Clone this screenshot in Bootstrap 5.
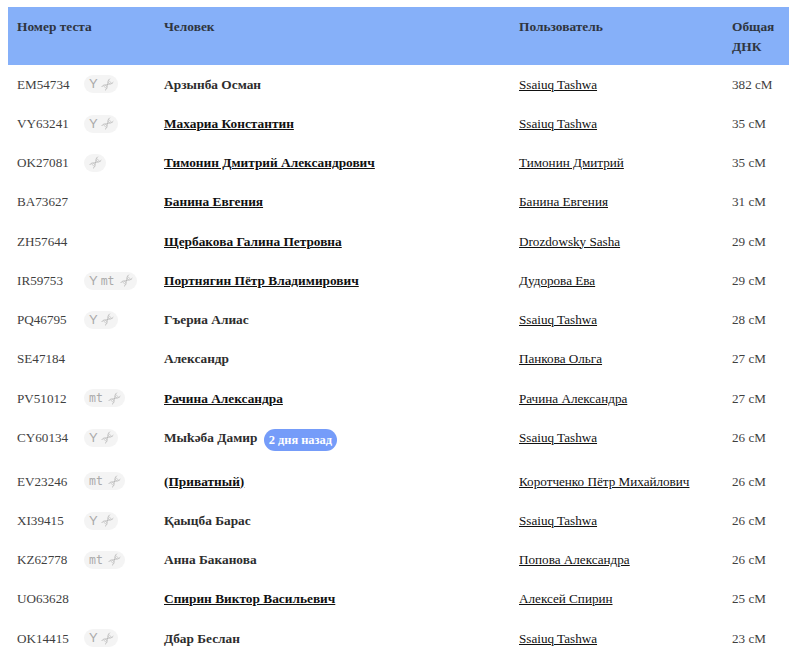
<!DOCTYPE html>
<html lang="ru">
<head>
<meta charset="utf-8">
<title>Совпадения</title>
<link href="https://cdn.jsdelivr.net/npm/bootstrap@5.3.0/dist/css/bootstrap.min.css" rel="stylesheet">
<style>
body{font-family:"Liberation Serif",serif;background:#fff;color:#333;overflow:hidden;height:660px}
.wrap-page{padding:7px 0 0 8px}
.match-table{table-layout:fixed;width:781px;margin:0;font-size:13.15px;line-height:19.5px;--bs-table-bg:transparent}
.match-table col.c1{width:147px}.match-table col.c2{width:355px}.match-table col.c3{width:213px}.match-table col.c4{width:66px}
.match-table th{background:#86b0f9;color:#2f3540;font-weight:700;font-size:13.4px;padding:10px 9px 9px;border:0;height:58px;vertical-align:top}
.match-table td{padding:9.5px 9px 10.25px;border:0;vertical-align:top;color:#3f3f3f}
.match-table td.who{font-weight:700;font-size:13.35px;color:#2d2d2d}
.match-table a{color:#111}
.kit-cell{display:flex;align-items:center;width:128px;height:19.5px}
.kit-id{width:67px;flex:none}
.kit-tags{display:inline-flex;align-items:center;gap:5px;background:#f4f4f4;border-radius:9px;height:18px;padding:0 4px 0 5px;font-family:"DejaVu Sans Mono","Liberation Mono",monospace;font-size:11.5px;color:#aaa;line-height:18px}
.kit-tags svg{width:13px;height:13px;display:block}
.kit-tags .ysign{font-family:"Liberation Sans",sans-serif;font-size:13px;margin-right:-2px}
.when{display:inline-block;background:#759cf9;color:#fff;border-radius:11px;font-weight:700;padding:0 5px;height:22px;line-height:22px;margin:0 0 1px 3px;font-size:12.4px;vertical-align:-2px}
</style>
</head>
<body>
<svg width="0" height="0" class="d-block position-absolute"><defs>
<symbol id="dna" viewBox="0 0 14 14"><g fill="none" stroke="#adadad" stroke-width=".85"><path d="M.8 9.500C3 6.500 5.500 8 7 7S10.500 7.500 13.200 4.500"/><path d="M4.500 13.200C7.500 11 6 8.500 7 7S6.500 3.500 9.500 .8"/></g><path d="M2.500 8.200l3.300 3.300M4.500 7.700l1.800 1.800M7.700 4.500l1.800 1.800M8.200 2.500l3.300 3.300" stroke="#c0c0c0" stroke-width=".8"/></symbol>
</defs></svg>
<div class="wrap-page">
<table class="table match-table">
<colgroup><col class="c1"><col class="c2"><col class="c3"><col class="c4"></colgroup>
<thead><tr><th>Номер теста</th><th>Человек</th><th>Пользователь</th><th>Общая ДНК</th></tr></thead>
<tbody>
<tr><td><div class="kit-cell"><span class="kit-id">EM54734</span><span class="kit-tags"><span class="ysign">Y</span><svg><use href="#dna"/></svg></span></div></td><td class="who">Арзынба Осман</td><td><a href="#">Ssaiuq Tashwa</a></td><td>382 сМ</td></tr>
<tr><td><div class="kit-cell"><span class="kit-id">VY63241</span><span class="kit-tags"><span class="ysign">Y</span><svg><use href="#dna"/></svg></span></div></td><td class="who"><a href="#">Махариа Константин</a></td><td><a href="#">Ssaiuq Tashwa</a></td><td>35 сМ</td></tr>
<tr><td><div class="kit-cell"><span class="kit-id">OK27081</span><span class="kit-tags"><svg><use href="#dna"/></svg></span></div></td><td class="who"><a href="#">Тимонин Дмитрий Александрович</a></td><td><a href="#">Тимонин Дмитрий</a></td><td>35 сМ</td></tr>
<tr><td><div class="kit-cell"><span class="kit-id">BA73627</span></div></td><td class="who"><a href="#">Банина Евгения</a></td><td><a href="#">Банина Евгения</a></td><td>31 сМ</td></tr>
<tr><td><div class="kit-cell"><span class="kit-id">ZH57644</span></div></td><td class="who"><a href="#">Щербакова Галина Петровна</a></td><td><a href="#">Drozdowsky Sasha</a></td><td>29 сМ</td></tr>
<tr><td><div class="kit-cell"><span class="kit-id">IR59753</span><span class="kit-tags"><span class="ysign">Y</span><span>mt</span><svg><use href="#dna"/></svg></span></div></td><td class="who"><a href="#">Портнягин Пётр Владимирович</a></td><td><a href="#">Дудорова Ева</a></td><td>29 сМ</td></tr>
<tr><td><div class="kit-cell"><span class="kit-id">PQ46795</span><span class="kit-tags"><span class="ysign">Y</span><svg><use href="#dna"/></svg></span></div></td><td class="who">Гъериа Алиас</td><td><a href="#">Ssaiuq Tashwa</a></td><td>28 сМ</td></tr>
<tr><td><div class="kit-cell"><span class="kit-id">SE47184</span></div></td><td class="who">Александр</td><td><a href="#">Панкова Ольга</a></td><td>27 сМ</td></tr>
<tr><td><div class="kit-cell"><span class="kit-id">PV51012</span><span class="kit-tags"><span>mt</span><svg><use href="#dna"/></svg></span></div></td><td class="who"><a href="#">Рачина Александра</a></td><td><a href="#">Рачина Александра</a></td><td>27 сМ</td></tr>
<tr><td><div class="kit-cell"><span class="kit-id">CY60134</span><span class="kit-tags"><span class="ysign">Y</span><svg><use href="#dna"/></svg></span></div></td><td class="who">Мыҟәба Дамир <span class="when">2 дня назад</span></td><td><a href="#">Ssaiuq Tashwa</a></td><td>26 сМ</td></tr>
<tr><td><div class="kit-cell"><span class="kit-id">EV23246</span><span class="kit-tags"><span>mt</span><svg><use href="#dna"/></svg></span></div></td><td class="who"><a href="#">(Приватный)</a></td><td><a href="#">Коротченко Пётр Михайлович</a></td><td>26 сМ</td></tr>
<tr><td><div class="kit-cell"><span class="kit-id">XI39415</span><span class="kit-tags"><span class="ysign">Y</span><svg><use href="#dna"/></svg></span></div></td><td class="who">Қаыцба Барас</td><td><a href="#">Ssaiuq Tashwa</a></td><td>26 сМ</td></tr>
<tr><td><div class="kit-cell"><span class="kit-id">KZ62778</span><span class="kit-tags"><span>mt</span><svg><use href="#dna"/></svg></span></div></td><td class="who">Анна Баканова</td><td><a href="#">Попова Александра</a></td><td>26 сМ</td></tr>
<tr><td><div class="kit-cell"><span class="kit-id">UO63628</span></div></td><td class="who"><a href="#">Спирин Виктор Васильевич</a></td><td><a href="#">Алексей Спирин</a></td><td>25 сМ</td></tr>
<tr><td><div class="kit-cell"><span class="kit-id">OK14415</span><span class="kit-tags"><span class="ysign">Y</span><svg><use href="#dna"/></svg></span></div></td><td class="who">Дбар Беслан</td><td><a href="#">Ssaiuq Tashwa</a></td><td>23 сМ</td></tr>
</tbody>
</table>
</div>
</body>
</html>
